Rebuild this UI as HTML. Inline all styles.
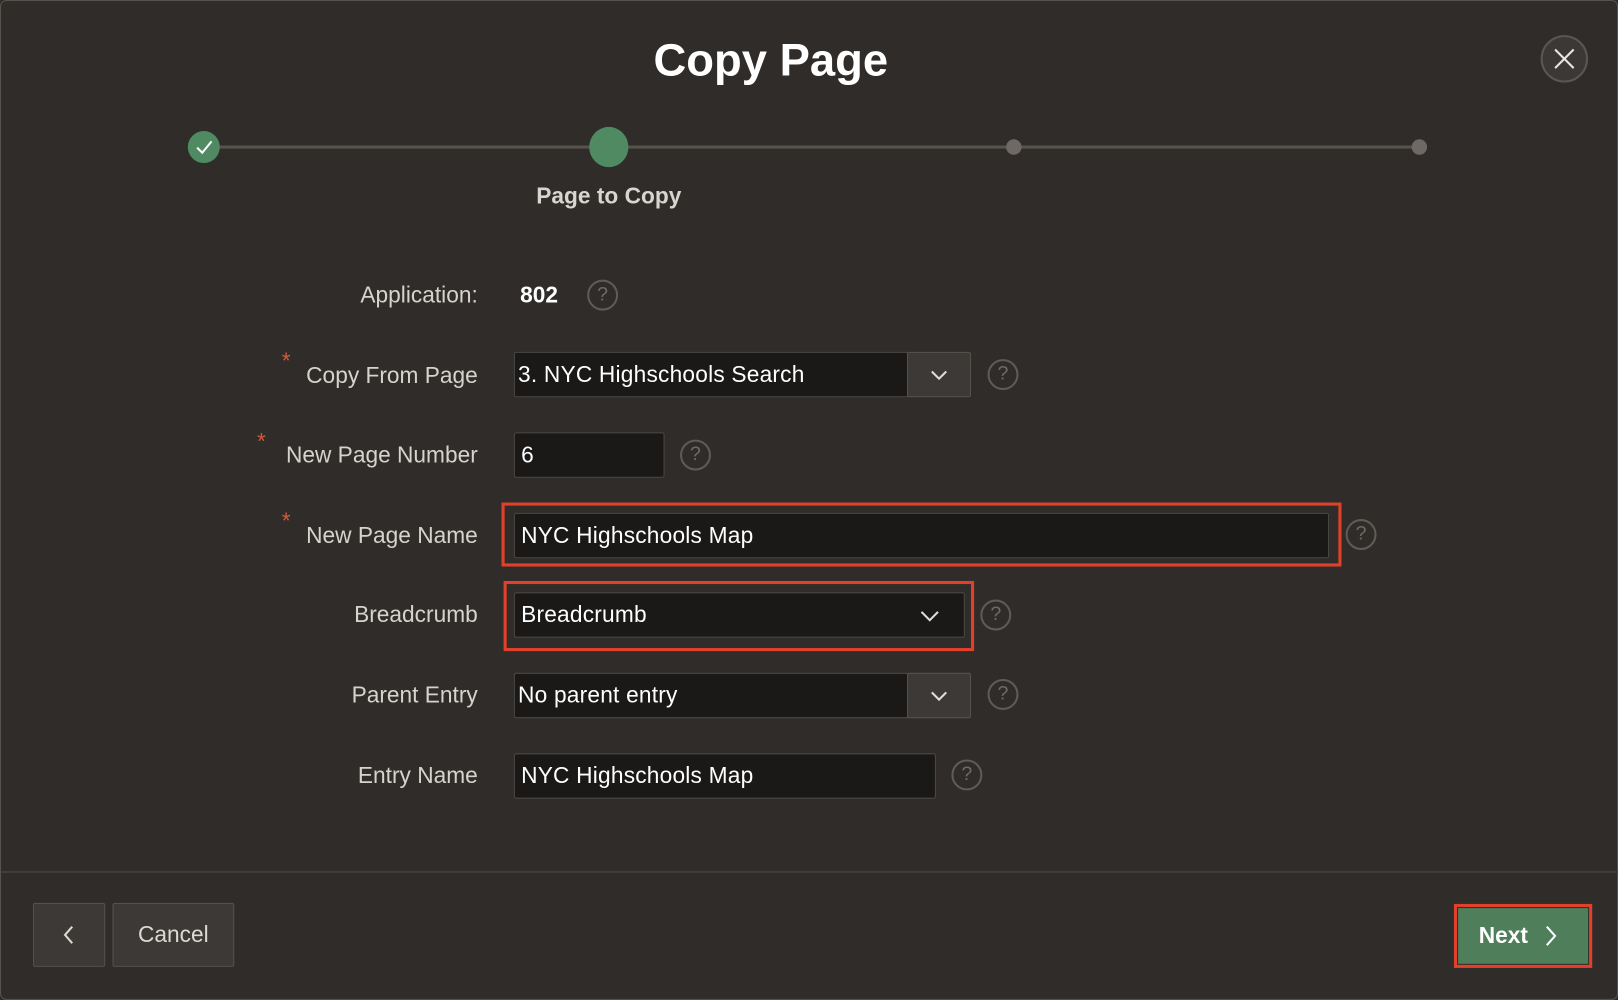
<!DOCTYPE html>
<html><head><meta charset="utf-8"><style>
html,body{margin:0;padding:0;width:1618px;height:1000px;overflow:hidden;background:#2e2b28;}
#s{position:absolute;left:0;top:0;width:1568px;height:969px;transform:scale(1.0319);transform-origin:0 0;font-family:"Liberation Sans",sans-serif;background:#2f2c29;border:1px solid #56534f;box-sizing:border-box;border-radius:6px;}
.a{position:absolute;}
.lbl{position:absolute;right:1104px;font-size:22px;color:#d6d3cf;line-height:44px;white-space:nowrap;letter-spacing:0px}
.star{color:#d05a3e;font-size:22px;position:absolute;}
.in{position:absolute;height:44px;background:#1a1918;border:1px solid #4a4744;box-sizing:border-box;border-radius:2px;color:#fff;font-size:22px;line-height:42px;padding-left:6px;letter-spacing:0.2px;}
.btn{position:absolute;background:#3c3936;border:1px solid #55524e;box-sizing:border-box;border-radius:2px;}
.help{position:absolute;width:30px;height:30px;border:2px solid #5f5b57;border-radius:50%;box-sizing:border-box;color:#6f6b67;font-size:19px;text-align:center;line-height:26px;}
.red{position:absolute;border:3px solid #e2402a;box-sizing:border-box;}
</style></head><body><div id="s">
<div class="a" style="left:0;width:1568px;top:33px;text-align:center;font-size:44px;font-weight:bold;color:#fff;"><span style="position:relative;left:-38px">Copy Page</span></div>
<div class="a" style="left:1492px;top:33px;width:46px;height:46px;border-radius:50%;border:2px solid #5a5652;background:#3b3835;box-sizing:border-box;">
<svg width="42" height="42" style="position:absolute;left:0;top:0"><path d="M12 12L30 30M30 12L12 30" stroke="#e8e6e3" stroke-width="2"/></svg></div>
<div class="a" style="left:196px;top:140px;width:1178px;height:3px;background:#57524e"></div>
<div class="a" style="left:181px;top:126px;width:31px;height:31px;border-radius:50%;background:#4f8a63">
<svg width="31" height="31"><path d="M9 16l5 5 9-11" stroke="#fff" stroke-width="2" fill="none"/></svg></div>
<div class="a" style="left:570px;top:122px;width:38px;height:39px;border-radius:50%;background:#4f8a63"></div>
<div class="a" style="left:974px;top:134px;width:15px;height:15px;border-radius:50%;background:#6e6964"></div>
<div class="a" style="left:1367px;top:134px;width:15px;height:15px;border-radius:50%;background:#6e6964"></div>
<div class="a" style="left:489px;width:200px;top:176px;text-align:center;font-size:22px;font-weight:bold;color:#d8d5d1">Page to Copy</div>

<div class="lbl" style="top:263px">Application:</div>
<div class="a" style="left:503px;top:263px;line-height:44px;font-size:22px;font-weight:bold;color:#fff">802</div>
<div class="help" style="left:568px;top:270px">?</div>

<div class="lbl" style="top:341px">Copy From Page</div><div class="star" style="left:272px;top:336px">*</div>
<div class="in" style="left:497px;top:340px;width:382px;padding-left:3px">3. NYC Highschools Search</div>
<div class="btn" style="left:878px;top:340px;width:62px;height:44px"><svg width="60" height="42"><path d="M23 18l7 7 7-7" stroke="#e0ddd9" stroke-width="2" fill="none"/></svg></div>
<div class="help" style="left:956px;top:347px">?</div>

<div class="lbl" style="top:418px">New Page Number</div><div class="star" style="left:248px;top:414px">*</div>
<div class="in" style="left:497px;top:418px;width:146px">6</div>
<div class="help" style="left:658px;top:425px">?</div>

<div class="lbl" style="top:496px">New Page Name</div><div class="star" style="left:272px;top:491px">*</div>
<div class="red" style="left:485px;top:486px;width:814px;height:62px"></div>
<div class="in" style="left:497px;top:496px;width:790px">NYC Highschools Map</div>
<div class="help" style="left:1303px;top:502px">?</div>

<div class="lbl" style="top:573px">Breadcrumb</div>
<div class="red" style="left:487px;top:562px;width:456px;height:68px"></div>
<div class="in" style="left:497px;top:573px;width:437px">Breadcrumb<svg width="22" height="14" style="position:absolute;right:22px;top:15px"><path d="M3 3l8 8 8-8" stroke="#e0ddd9" stroke-width="2" fill="none"/></svg></div>
<div class="help" style="left:949px;top:580px">?</div>

<div class="lbl" style="top:651px">Parent Entry</div>
<div class="in" style="left:497px;top:651px;width:382px;padding-left:3px">No parent entry</div>
<div class="btn" style="left:878px;top:651px;width:62px;height:44px"><svg width="60" height="42"><path d="M23 18l7 7 7-7" stroke="#e0ddd9" stroke-width="2" fill="none"/></svg></div>
<div class="help" style="left:956px;top:657px">?</div>

<div class="lbl" style="top:729px">Entry Name</div>
<div class="in" style="left:497px;top:729px;width:409px">NYC Highschools Map</div>
<div class="help" style="left:921px;top:735px">?</div>

<div class="a" style="left:0;top:843px;width:1568px;height:2px;background:#403d3a"></div>
<div class="btn" style="left:31px;top:874px;width:70px;height:62px"><svg width="68" height="60"><path d="M37 22l-7 8 7 8" stroke="#dcd9d5" stroke-width="2" fill="none"/></svg></div>
<div class="btn" style="left:108px;top:874px;width:118px;height:62px;color:#dcd9d5;font-size:22px;text-align:center;line-height:60px">Cancel</div>
<div class="red" style="left:1408px;top:875px;width:134px;height:62px"></div>
<div class="a" style="left:1412px;top:879px;width:126px;height:54px;background:#4f7e5b;color:#fff;font-size:22px;font-weight:bold;line-height:54px;"><span style="position:absolute;left:20px">Next</span><svg width="16" height="24" style="position:absolute;left:82px;top:15px"><path d="M4 3l8 9-8 9" stroke="#fff" stroke-width="2" fill="none"/></svg></div>
</div></body></html>
